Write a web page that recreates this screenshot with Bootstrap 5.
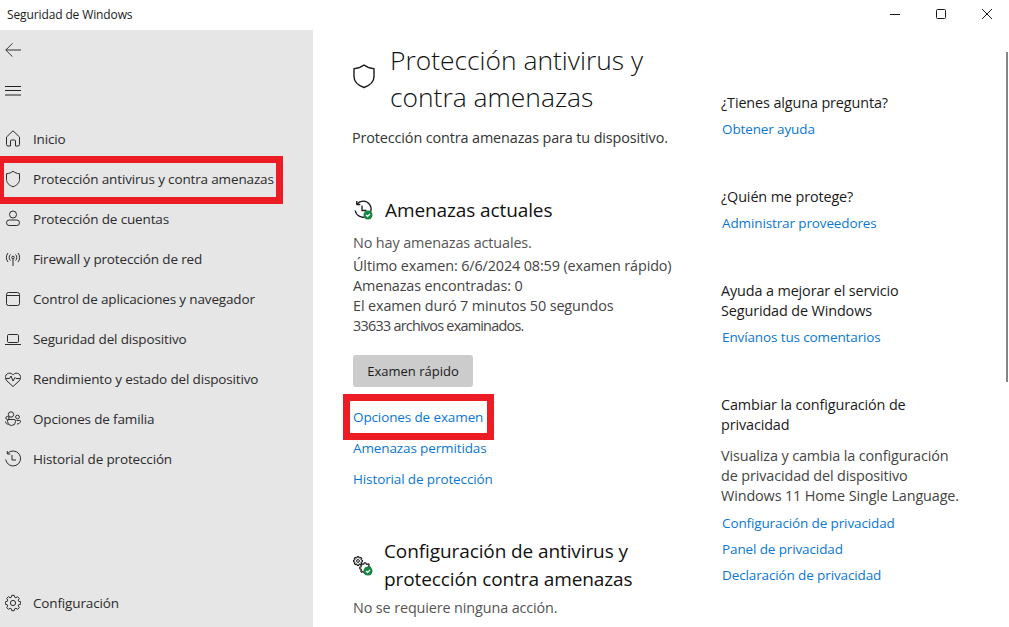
<!DOCTYPE html>
<html lang="es">
<head>
<meta charset="UTF-8" />
<title>Seguridad de Windows</title>
<link href="https://cdn.jsdelivr.net/npm/bootstrap@5.3.0/dist/css/bootstrap.min.css" rel="stylesheet" />
<style>
    html, body { height: 627px; overflow: hidden; }
    body { font-family: "Open Sans", "Noto Sans", sans-serif; font-size: 13.5px; line-height: 20px; color: #1a1a1a; background: #fff; letter-spacing: -0.12px; }
    svg { display: block; flex: none; fill: none; stroke: currentColor; stroke-width: 1; stroke-linejoin: round; }
    a { color: #0a78d2; text-decoration: none; }

    .win-bar { height: 30px; font-size: 12px; padding-left: 7px; }
    .win-controls { gap: 30px; padding-right: 14px; margin-bottom: 2px; }
    .win-body { height: 597px; }

    .side-pane { width: 313px; background: #e6e6e6; color: #222; }
    .side-tool { height: 40px; padding-left: 5px; }
    .side-list { margin-top: 9px; }
    .side-link { height: 40px; padding: 0 0 0 5px; color: #2b2b2b; gap: 12px; position: relative; letter-spacing: -0.15px; }
    .side-link:hover { color: #2b2b2b; }
    .side-end { margin-top: auto; margin-bottom: 4px; }
    .back-icon { color: #333; }

    .mark-box { position: absolute; border: 7px solid #ed1c24; pointer-events: none; }
    .mark-side { left: 0; top: -3px; width: 283px; height: 48px; border-left-width: 4px; }
    .mark-link { left: -10px; top: -13px; width: 151px; height: 46px; }

    .main-pane { position: relative; }
    .main-col { width: 369px; padding: 12px 0 0 39px; flex: none; }
    .title-row { gap: 14px; }
    .page-icon { margin: 0 0 7px 0; }
    .page-title { font-size: 26.4px; line-height: 37px; font-weight: 300; margin: 0; letter-spacing: 0; color: #111; }
    .page-sub { margin: 12px 0 0; color: #333; font-size: 14.4px; }
    .sec-head { margin-top: 48px; gap: 9px; }
    .sec-title { font-size: 19px; line-height: 28px; font-weight: 400; margin: 0; letter-spacing: -0.1px; color: #111; }
    .status-text { color: #555; margin: 9px 0 0 1px; font-size: 14.4px; }
    .status-text-close { margin-top: 5px; }
    .status-more { margin: 3px 0 0 1px; color: #444; font-size: 14.4px; }
    .digits-line { letter-spacing: -0.75px; }
    .scan-btn { display: block; margin: 19px 0 0 1px; width: 120px; height: 32px; background: #ccc; border: 0; border-radius: 3px; padding: 0; font-size: 13px; line-height: 20px; color: #1a1a1a; --bs-btn-hover-bg: #ccc; }
    .link-stack { margin: 20px 0 0 1px; gap: 11px; }
    .link-anchor { position: relative; align-self: flex-start; }

    .help-col { padding: 63px 0 0 0; width: 270px; margin-left: 39px; }
    .help-block + .help-block { margin-top: 48px; }
    .help-block p { margin: 0; font-size: 14.4px; }
    .help-block a { display: block; margin: 6px 0 0 1px; }
    .help-block .help-desc { margin-top: 11px; padding-bottom: 1px; color: #444; }

    .scroll-thumb { position: absolute; right: 1px; top: 22px; width: 2px; height: 330px; background: #868686; }
</style>
</head>
<body>
<header class="win-bar d-flex align-items-center justify-content-between">
    <span>Seguridad de Windows</span>
    <div class="win-controls d-flex align-items-center">
        <svg width="16" height="12" viewBox="0 0 16 12"><path d="M3 6.500h10"/></svg>
        <svg width="16" height="12" viewBox="0 0 16 12"><rect x="3.500" y="1.500" width="9" height="9" rx="1"/></svg>
        <svg width="16" height="12" viewBox="0 0 16 12"><path d="M3 1l10 10M13 1L3 11"/></svg>
    </div>
</header>

<div class="win-body d-flex">
    <aside class="side-pane d-flex flex-column">
        <div class="side-tool d-flex align-items-center back-icon">
            <svg width="16" height="14" viewBox="0 0 16 14"><path d="M16 7H.8M7.500.3L.8 7l6.700 6.700"/></svg>
        </div>
        <div class="side-tool d-flex align-items-center">
            <svg width="16" height="12" viewBox="0 0 16 12"><path d="M0 2.500h16M0 6.500h16M0 11h16"/></svg>
        </div>
        <nav class="nav flex-column side-list">
            <a class="nav-link side-link d-flex align-items-center" href="#">
                <svg width="16" height="18" viewBox="0 0 16 18"><path d="M1.500 7L8 .8 14.500 7v7.500a1.500 1.500 0 0 1-1.500 1.500h-2.500v-5a1 1 0 0 0-1-1h-3a1 1 0 0 0-1 1v5H3a1.500 1.500 0 0 1-1.500-1.500z"/></svg>
                Inicio
            </a>
            <a class="nav-link side-link d-flex align-items-center" href="#">
                <svg width="16" height="18" viewBox="0 0 16 18"><path d="M8 1.200c2 1.600 4 2.400 6.500 2.500v5.600c0 3.300-2.300 6-6.500 7.500-4.200-1.500-6.500-4.200-6.500-7.500V3.700C4 3.600 6 2.800 8 1.200z"/></svg>
                Protección antivirus y contra amenazas
                <span class="mark-box mark-side"></span>
            </a>
            <a class="nav-link side-link d-flex align-items-center" href="#">
                <svg width="16" height="18" viewBox="0 0 16 18"><circle cx="8" cy="4.500" r="3.500"/><rect x="1.500" y="10" width="13" height="5.500" rx="2.700"/></svg>
                Protección de cuentas
            </a>
            <a class="nav-link side-link d-flex align-items-center" href="#">
                <svg width="16" height="18" viewBox="0 0 16 18"><circle cx="8" cy="7.500" r="1.300"/><path d="M8 9v7M5.500 4.500a4 4 0 0 0 0 6M10.500 4.500a4 4 0 0 1 0 6M3 3a7 7 0 0 0 0 9M13 3a7 7 0 0 1 0 9"/></svg>
                Firewall y protección de red
            </a>
            <a class="nav-link side-link d-flex align-items-center" href="#">
                <svg width="16" height="18" viewBox="0 0 16 18"><rect x="1.500" y="2.500" width="13" height="13" rx="2"/><path d="M1.500 5.500h13"/></svg>
                Control de aplicaciones y navegador
            </a>
            <a class="nav-link side-link d-flex align-items-center" href="#">
                <svg width="16" height="18" viewBox="0 0 16 18"><rect x="2.500" y="4.500" width="11" height="8" rx="1.200"/><path d="M0 14.500h16"/></svg>
                Seguridad del dispositivo
            </a>
            <a class="nav-link side-link d-flex align-items-center" href="#">
                <svg width="16" height="18" viewBox="0 0 16 18"><path d="M2 11C.6 9.500.3 8 .5 6.500 1 4 3 3 5 3.200c1.300.1 2.300.8 3 1.800.7-1 1.700-1.700 3-1.800 2-.2 4 .8 4.500 3.300.2 1.500-.1 3-1.500 4.500l-6 5.500z"/><path d="M.8 8.500h3.700l1.500-2.500 2 5 2-3.500 1 1h4.200"/></svg>
                Rendimiento y estado del dispositivo
            </a>
            <a class="nav-link side-link d-flex align-items-center" href="#">
                <svg width="16" height="18" viewBox="0 0 16 18"><circle cx="6" cy="4.500" r="2.700"/><circle cx="12.500" cy="7" r="1.900"/><circle cx="2.500" cy="8" r="1.600"/><path d="M4 9.500h5a1.500 1.500 0 0 1 1.500 1.500v.5a4 4 0 0 1-8 0V11A1.500 1.500 0 0 1 4 9.500z"/><path d="M11.500 10.500h3.300c.5 0 .9.400.7 1-.4 1.500-1.700 2.500-3.500 2.500M.5 11.500c0 1.500 1 2.500 2.200 2.800"/></svg>
                Opciones de familia
            </a>
            <a class="nav-link side-link d-flex align-items-center" href="#">
                <svg width="16" height="18" viewBox="0 0 16 18"><path d="M2.500 3.500A7.500 7.500 0 1 1 .7 9.500"/><path d="M2.300 1v3h3M7 5v5h4"/></svg>
                Historial de protección
            </a>
        </nav>
        <a class="nav-link side-link side-end d-flex align-items-center" href="#">
            <svg width="16" height="18" viewBox="0 0 16 18"><circle cx="8" cy="9" r="2.600"/><path transform="translate(8 9)" d="M5.770-1.650L7.700-1.220 7.700 1.220 5.770 1.650 5.250 2.910 6.310 4.580 4.580 6.310 2.910 5.250 1.650 5.770 1.220 7.700-1.220 7.700-1.650 5.770-2.910 5.250-4.580 6.310-6.310 4.580-5.250 2.910-5.770 1.650-7.700 1.220-7.700-1.220-5.770-1.650-5.250-2.910-6.310-4.580-4.580-6.310-2.910-5.250-1.650-5.770-1.220-7.700 1.220-7.700 1.650-5.770 2.910-5.250 4.580-6.310 6.310-4.580 5.250-2.910z"/></svg>
            Configuración
        </a>
    </aside>

    <main class="main-pane flex-grow-1 d-flex">
        <section class="main-col">
            <div class="title-row d-flex align-items-center">
                <svg class="page-icon" width="24" height="26" viewBox="0 0 24 26"><path d="M12 2c3 2.300 6 3.400 10 3.600v8c0 4.800-3.400 8.700-10 10.900C5.400 22.300 2 18.400 2 13.600v-8C6 5.400 9 4.300 12 2z" stroke-width="1.400"/></svg>
                <h1 class="page-title">Protección antivirus y<br />contra amenazas</h1>
            </div>
            <p class="page-sub">Protección contra amenazas para tu dispositivo.</p>

            <div class="sec-head d-flex align-items-center">
                <svg width="24" height="22" viewBox="0 0 24 22"><path d="M5 5a8 8 0 1 1-1.800 6.500" stroke-width="1.300"/><path d="M4.800 2v3.500h3.500M10 6.500v5h4.500" stroke-width="1.300"/><circle cx="16" cy="16" r="4.500" fill="#10893e" stroke="none"/><path d="M14 16l1.500 1.500 2.500-2.500" stroke="#fff" stroke-width="1.200"/></svg>
                <h2 class="sec-title">Amenazas actuales</h2>
            </div>
            <p class="status-text">No hay amenazas actuales.</p>
            <p class="status-more mb-0">Último examen: 6/6/2024 08:59 (examen rápido)<br />Amenazas encontradas: 0<br />El examen duró 7 minutos 50 segundos<br /><span class="digits-line">33633 archivos examinados.</span></p>
            <button class="btn scan-btn" type="button">Examen rápido</button>
            <div class="link-stack d-flex flex-column">
                <a class="link-anchor" href="#">Opciones de examen<span class="mark-box mark-link"></span></a>
                <a href="#">Amenazas permitidas</a>
                <a href="#">Historial de protección</a>
            </div>

            <div class="sec-head d-flex align-items-center">
                <svg width="23" height="24" viewBox="0 0 23 24">
                    <path transform="translate(6 8) scale(.58)" stroke-width="1.900" d="M5.770-1.650L7.700-1.220 7.700 1.220 5.770 1.650 5.250 2.910 6.310 4.580 4.580 6.310 2.910 5.250 1.650 5.770 1.220 7.700-1.220 7.700-1.650 5.770-2.910 5.250-4.580 6.310-6.310 4.580-5.250 2.910-5.770 1.650-7.700 1.220-7.700-1.220-5.770-1.650-5.250-2.910-6.310-4.580-4.580-6.310-2.910-5.250-1.650-5.770-1.220-7.700 1.220-7.700 1.650-5.770 2.910-5.250 4.580-6.310 6.310-4.580 5.250-2.910z"/>
                    <circle cx="6" cy="8" r="1.400"/>
                    <path transform="translate(13 15) scale(.68)" stroke-width="1.700" d="M5.770-1.650L7.700-1.220 7.700 1.220 5.770 1.650 5.250 2.910 6.310 4.580 4.580 6.310 2.910 5.250 1.650 5.770 1.220 7.700-1.220 7.700-1.650 5.770-2.910 5.250-4.580 6.310-6.310 4.580-5.250 2.910-5.770 1.650-7.700 1.220-7.700-1.220-5.770-1.650-5.250-2.910-6.310-4.580-4.580-6.310-2.910-5.250-1.650-5.770-1.220-7.700 1.220-7.700 1.650-5.770 2.910-5.250 4.580-6.310 6.310-4.580 5.250-2.910z"/>
                    <circle cx="16" cy="18" r="4.500" fill="#10893e" stroke="none"/><path d="M14 18l1.500 1.500 2.500-2.500" stroke="#fff" stroke-width="1.200"/>
                </svg>
                <h2 class="sec-title">Configuración de antivirus y<br />protección contra amenazas</h2>
            </div>
            <p class="status-text status-text-close">No se requiere ninguna acción.</p>
        </section>

        <section class="help-col">
            <div class="help-block">
                <p>¿Tienes alguna pregunta?</p>
                <a href="#">Obtener ayuda</a>
            </div>
            <div class="help-block">
                <p>¿Quién me protege?</p>
                <a href="#">Administrar proveedores</a>
            </div>
            <div class="help-block">
                <p>Ayuda a mejorar el servicio<br />Seguridad de Windows</p>
                <a href="#">Envíanos tus comentarios</a>
            </div>
            <div class="help-block">
                <p>Cambiar la configuración de<br />privacidad</p>
                <p class="help-desc">Visualiza y cambia la configuración<br />de privacidad del dispositivo<br />Windows 11 Home Single Language.</p>
                <a href="#">Configuración de privacidad</a>
                <a href="#">Panel de privacidad</a>
                <a href="#">Declaración de privacidad</a>
            </div>
        </section>
        <div class="scroll-thumb"></div>
    </main>
</div>
<script src="https://cdn.jsdelivr.net/npm/bootstrap@5.3.0/dist/js/bootstrap.bundle.min.js"></script>
</body>
</html>
